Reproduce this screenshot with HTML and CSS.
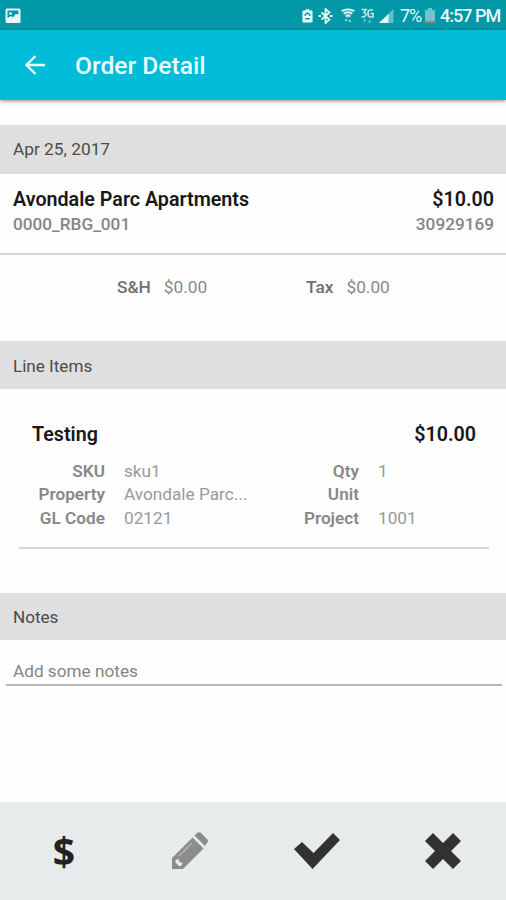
FILE: index.html
```html
<!DOCTYPE html>
<html lang="en">
<head>
<meta charset="utf-8">
<title>Order Detail</title>
<link rel="stylesheet" href="styles.css">
</head>
<body>
<div class="screen">
  <div class="status-bar">
    <svg class="notice" width="16" height="16" viewBox="0 0 16 16"><rect x=".5" y=".5" width="15" height="14.500" rx="1.500" fill="#e9f9fa"/><path d="M2.500 2.500h11v4l-3-.5-2.500 3.500-2-1.500-3.500 2z" fill="#0098a9"/><path d="M4 4.500h3v2H4z" fill="#e9f9fa"/></svg>
    <div class="status-icons">
      <svg width="11" height="16" viewBox="0 0 12 16"><path d="M4 .5h4v1.500h2.500q1 0 1 1v11q0 1-1 1h-9q-1 0-1-1V3q0-1 1-1H4z" fill="#eefafb"/><path d="M3.500 8V6.500L6 4.500l2.500 2V8M3.500 11h5" fill="none" stroke="#0098a9" stroke-width="1.500"/></svg>
      <svg width="15" height="16" viewBox="0 0 14 16"><path d="M3 4.500l8 7-4 3.500V1l4 3.500-8 7" fill="none" stroke="#eefafb" stroke-width="1.700"/><path d="M0 8h2.500M11.500 8H14" stroke="#eefafb" stroke-width="2"/></svg>
      <svg width="14" height="16" viewBox="0 0 15 16"><path d="M.5 2.500Q7.500-2 14.500 2.500L8.500 10h-2z" fill="#58b9c3"/><path d="M.5 2.500Q7.500-1 14.500 2.500M3 5.500q4.500-3 9 0M5 8.500q2.500-2 5 0" fill="none" stroke="#eefafb" stroke-width="1.500"/><path d="M4 11.500h3L5.500 14.500zM8 14.500h3l-1.500-3z" fill="#a6e5ea"/></svg>
      <svg width="13" height="16" viewBox="0 0 13 16"><path d="M.5 1.500H5L3 4.500q4 1.500 0 4.500H.5M12 2H9Q7 2 7 5.500T9.500 9H12V5.500H9.500" fill="none" stroke="#bce7eb" stroke-width="1.700"/><path d="M2 11.500h3.500L3.700 14.500zM7 14.500h3.500l-1.700-3z" fill="#62c9d6"/></svg>
      <svg class="signal" width="15" height="16" viewBox="0 0 15 16"><path d="M14.500 1v14H0z" fill="#5fc0ca"/><path d="M9.500 6v9H0z" fill="#e4f5f7"/></svg>
      <span class="percent">7%</span>
      <svg class="battery" width="10" height="15" viewBox="0 0 10 15"><path d="M3 0h4v2h3v13H0V2h3z" fill="#70c4cd"/><path d="M0 13h10v2H0z" fill="#8f8f80"/></svg>
      <span class="clock">4:57 PM</span>
    </div>
  </div>
  <header class="app-bar">
    <svg width="20" height="20" viewBox="0 0 20 20" fill="none" stroke="#e9fcff" stroke-width="2.300"><path d="M20 10H2M10.500 1L1.500 10l9 9"/></svg>
    <h1>Order Detail</h1>
  </header>
  <main>
    <h2 class="section date">Apr 25, 2017</h2>
    <div class="summary">
      <div class="row strong"><span class="customer">Avondale Parc Apartments</span><span class="price">$10.00</span></div>
      <div class="row sub"><span class="code">0000_RBG_001</span><span class="number">30929169</span></div>
    </div>
    <div class="charges">
      <div class="charge"><b>S&amp;H</b><span>$0.00</span></div>
      <div class="charge"><b>Tax</b><span>$0.00</span></div>
    </div>
    <h2 class="section">Line Items</h2>
    <div class="item">
      <div class="row strong"><span>Testing</span><span class="price">$10.00</span></div>
      <div class="details">
        <b>SKU</b><span>sku1</span><b>Qty</b><span>1</span>
        <b>Property</b><span>Avondale Parc...</span><b>Unit</b><span></span>
        <b>GL Code</b><span>02121</span><b>Project</b><span>1001</span>
      </div>
    </div>
    <h2 class="section notes-title">Notes</h2>
    <div class="note-field">Add some notes</div>
  </main>
  <footer class="actions">
    <div><span class="dollar">$</span></div>
    <div><svg class="pencil" width="38" height="38" viewBox="0 0 38 38"><path d="M1 26L21.500 5.500l11 11L12 37H1z" fill="#8b8c8c"/><path d="M23.500 3.500l2.500-2.500q2-1.500 4 0l6 6q2 2 0 4l-2 3z" fill="#8b8c8c"/><path d="M8 24L21 11" stroke="#b4b6b6" stroke-width="1.500"/><path d="M4.500 28l3-1 1 3 3 1-1.500 3-2 0-3.500-3.500z" fill="#e7ebeb"/></svg></div>
    <div><svg width="48" height="38" viewBox="0 0 48 38"><path d="M1 17l8-7 11.500 11L40 1l7 7-27.500 29z" fill="#323330"/></svg></div>
    <div><svg width="38" height="38" viewBox="0 0 38 38"><path d="M9 1l10 10L29 1l8 8-10 10 10 10-8 8-10-10L9 37l-8-8 10-10L1 9z" fill="#323330"/></svg></div>
  </footer>
</div>
</body>
</html>
```
FILE: styles.css
```css
* { box-sizing: border-box; }
body { margin: 0; background: #fefefe; font-family: Roboto, "Liberation Sans", sans-serif; color: #777; }
svg { display: block; flex: none; }
h1, h2 { margin: 0; }
.screen { width: 506px; height: 900px; display: flex; flex-direction: column; overflow: hidden; }
.status-bar { height: 30px; flex: none; background: #0097a7; display: flex; align-items: center; justify-content: space-between; padding: 1px 6px 0 5px; color: #e6f7f9; }
.status-icons { display: flex; align-items: center; font-size: 18px; line-height: 20px; }
.status-icons svg { margin-right: 5px; }
.status-icons svg:nth-child(2) { margin-right: 8px; }
.status-icons svg:nth-child(3) { margin-right: 6px; }
.signal.signal { margin-right: 6px; }
.percent { width: 21px; margin-right: 4px; letter-spacing: -1px; }
.clock { width: 60px; white-space: nowrap; letter-spacing: -1px; font-weight: 500; }
.app-bar { height: 70px; flex: none; display: flex; align-items: center; gap: 30px; padding-left: 25px; background: #00bcd8; color: #e9fcff; box-shadow: 0 1px 4px rgba(0,0,0,.45); }
h1 { font-size: 24.600px; font-weight: 500; line-height: 30px; margin-top: 1px; }
main { flex: 1; display: flex; flex-direction: column; }
.section { height: 48px; flex: none; display: flex; align-items: center; padding: 1px 13px 0; background: #dfdfdf; color: #4b4b4b; font-size: 17.100px; font-weight: 400; }
.section.date { height: 49px; margin-top: 25px; padding: 0 13px 1px; font-size: 17.300px; }
.section.notes-title { height: 47px; padding-top: 0; }
.row { display: flex; justify-content: space-between; }
.strong { color: #181818; font-size: 19.700px; line-height: 24px; font-weight: 600; }
.sub { font-size: 17.200px; line-height: 24px; font-weight: 500; color: #858585; }
.summary { height: 81px; padding: 14px 12px 0 13px; border-bottom: 2px solid #d5d5d5; }
.charges { height: 86px; display: flex; padding: 20px 0 0 117px; font-size: 17.300px; line-height: 24px; }
.charge { display: flex; gap: 13px; width: 189px; color: #888; }
.charge b { color: #707070; font-weight: 500; }
.item { height: 160px; margin: 0 17px 44px 19px; padding: 34px 13px 0; border-bottom: 2px solid #d8d8d8; }
.details { display: grid; grid-template-columns: 73px 142px 112px 1fr; grid-auto-rows: 23.400px; margin-top: 13px; font-size: 17.200px; line-height: 23px; color: #999; }
.details b { font-weight: 600; color: #888; text-align: right; }
.details span { padding-left: 19px; white-space: nowrap; }
.note-field { margin: 0 4px 0 6px; height: 46px; padding: 19px 7px 0; border-bottom: 2px solid #b8b8b8; font-size: 17.200px; line-height: 24px; color: #858585; }
.actions { height: 98px; flex: none; background: #e7ebeb; display: grid; grid-template-columns: repeat(4, 1fr); align-items: center; justify-items: center; padding-left: 2px; }
.dollar { font: 700 39px/40px "Open Sans", sans-serif; color: #222; margin-right: 2px; }
.pencil { margin-right: 2px; }
```
